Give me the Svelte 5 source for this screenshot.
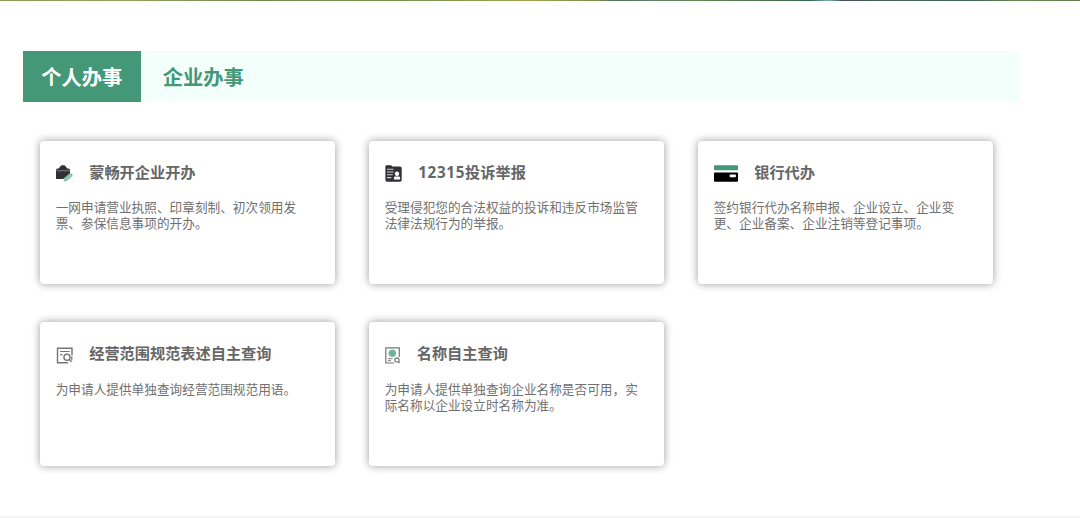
<script>
	let tabs = ['个人办事', '企业办事'];
	let active = 0;

	let services = [
		{ icon: 'bag', title: '蒙畅开企业开办', desc: '一网申请营业执照、印章刻制、初次领用发票、参保信息事项的开办。' },
		{ icon: 'report', number: '12315', title: '投诉举报', desc: '受理侵犯您的合法权益的投诉和违反市场监管法律法规行为的举报。' },
		{ icon: 'bank', title: '银行代办', desc: '签约银行代办名称申报、企业设立、企业变更、企业备案、企业注销等登记事项。' },
		{ icon: 'scope', title: '经营范围规范表述自主查询', desc: '为申请人提供单独查询经营范围规范用语。' },
		{ icon: 'name', title: '名称自主查询', desc: '为申请人提供单独查询企业名称是否可用，实际名称以企业设立时名称为准。' }
	];
</script>

<div class="page">
	<div class="banner"></div>

	<div class="tabs">
		{#each tabs as tab, i}
			<button class="tab" class:active={active === i} on:click={() => (active = i)}>{tab}</button>
		{/each}
	</div>

	<div class="cards">
		{#each services as item}
			<div class="card">
				<div class="head">
					{#if item.icon === 'bag'}
						<svg width="17" height="17" viewBox="0 0 17 17">
							<path d="M0 5Q0 3.500 1.500 3.500H2.800L4.400 1.200Q5 .3 6 .3H8Q9 .3 9.600 1.200L11.200 3.500H12.500Q14 3.500 14 5V14H0Z" fill="#303134" />
							<path d="M.3 5.700H3M5 5.700H9M11 5.700H13.800" stroke="#8c8d8f" stroke-width=".8" />
							<path d="M4 4.800V6.800M10 4.800V6.800" stroke="#87898a" stroke-width="1" />
							<path d="M7.400 16.800 8.300 13.200 13.900 8.600Q15.200 7.900 16.300 8.900 17.200 10 16.300 11.200L10.800 16.100Z" fill="#78b9a0" stroke="#fff" stroke-width=".4" />
							<path d="M9.800 14.600 15 10.200" stroke="#b9dccf" stroke-width=".9" />
						</svg>
					{:else if item.icon === 'report'}
						<svg width="17" height="17" viewBox="0 0 17 17">
							<path d="M1.500 .3H6L7.600 1.600H15Q16.700 1.600 16.700 3.300V15Q16.700 16.700 15 16.700H2Q.4 16.700 .4 15V1.500Q.4 .3 1.500 .3Z" fill="#303134" />
							<path d="M2 4.200H8.500M2 7H8.500M2 9.800H7.800M2 12.600H6.300" stroke="#d0d0d1" stroke-width="1.100" />
							<circle cx="12" cy="8.800" r="2.200" fill="#fff" />
							<path d="M8.900 14.600V13Q8.900 11.600 10.300 11.600H13.600Q15.100 11.600 15.100 13V14.600Z" fill="#fff" />
						</svg>
					{:else if item.icon === 'bank'}
						<svg width="24" height="17" viewBox="0 0 24 17">
							<rect x="0" y=".2" width="24" height="5" rx=".8" fill="#449777" />
							<rect x="0" y="7.500" width="24" height="9.300" rx=".8" fill="#000" />
							<rect x="15.700" y="9.400" width="6.200" height="2.800" rx=".7" fill="#fff" />
						</svg>
					{:else if item.icon === 'scope'}
						<svg width="17" height="17" viewBox="0 0 17 17" fill="none" stroke="#767676">
							<path d="M16 8.500V1.300H1.500V15.700H12" stroke-width="1.400" />
							<path d="M4 4.500H13.700M4 7.600H6.500" stroke-width="1.200" />
							<circle cx="11" cy="10.300" r="3.100" stroke-width="1.400" />
							<path d="M13.200 12.600 15.500 15M15.800 9.500V13.500" stroke-width="1.200" />
						</svg>
					{:else}
						<svg width="15.500" height="17" viewBox="0 0 15.500 17" fill="none" stroke="#777">
							<path d="M14.300 10V.8H.8V16H9" stroke-width="1.200" />
							<circle cx="7.300" cy="6.200" r="3.800" fill="#72b99e" stroke="none" />
							<path d="M5.800 5.600 7.300 7.100 8.800 5.600" stroke="#449777" stroke-width=".8" />
							<path d="M3 11.700H7.600M3 13.700H6" stroke-width="1" />
							<circle cx="11.900" cy="12.900" r="2.100" stroke-width="1.200" />
							<path d="M13.300 14.500 14.600 16" stroke-width="1.200" />
						</svg>
					{/if}
					<h3>{#if item.number}<span class="number">{item.number}</span>{/if}{item.title}</h3>
				</div>
				<p>{item.desc}</p>
			</div>
		{/each}
	</div>

	<div class="footer"></div>
</div>

<style>
	:global(body) {
		background: #fff;
	}

	.page {
		display: flex;
		flex-direction: column;
		width: 1080px;
		height: 518px;
		overflow: hidden;
		font-family: 'Open Sans', 'Noto Sans CJK SC', sans-serif;
	}

	/* bottom edge of the landscape banner */
	.banner {
		height: 1px;
		flex: none;
		background: linear-gradient(90deg, #8a9a5a, #91a060 12%, #728a50 24%, #7d9850 40%, #a0a54e 49%, #789050 55%, #557058 57%, #60806a 60%, #5c8750 65%, #48704f 72%, #38684b 75%, #80aeb0 76.700%, #434f55 78%, #42665a 83%, #3f6555 90%, #628750 94%, #667e50);
	}

	.tabs {
		display: flex;
		flex: none;
		width: 996px;
		height: 50.600px;
		margin: 50.400px 0 0 22.800px;
		background: #f2fffb;
	}

	.tab {
		width: 118px;
		padding: 0;
		border: none;
		background: none;
		color: #449777;
		font: inherit;
		font-size: 20.300px;
		font-weight: bold;
		line-height: 50px;
		cursor: pointer;
	}

	.tab:not(:first-child) {
		width: 125px;
	}

	.tab.active {
		background: #449777;
		color: #fff;
	}

	.cards {
		display: grid;
		grid-template-columns: repeat(3, 295.500px);
		grid-auto-rows: 143.500px;
		gap: 38px 33.500px;
		margin: 38.700px 0 0 39.700px;
	}

	.card {
		box-sizing: border-box;
		padding: 19px 16px;
		border-radius: 4px;
		background: #fff;
		box-shadow: 0 0 8px rgba(0, 0, 0, 0.4);
	}

	.head {
		display: flex;
		align-items: center;
		height: 25px;
	}

	.head svg {
		flex: none;
		margin-top: 3px;
	}

	h3 {
		margin: 0 0 0 16.500px;
		color: #666;
		font-size: 15.200px;
		font-weight: bold;
		line-height: 25px;
		white-space: nowrap;
	}

	.number {
		letter-spacing: 0.7px;
	}

	p {
		margin: 14.500px 0 0;
		width: 256px;
		color: #707070;
		font-size: 12.660px;
		line-height: 16.200px;
	}

	.footer {
		height: 2px;
		flex: none;
		margin-top: auto;
		background: #f5f5f5;
	}
</style>
